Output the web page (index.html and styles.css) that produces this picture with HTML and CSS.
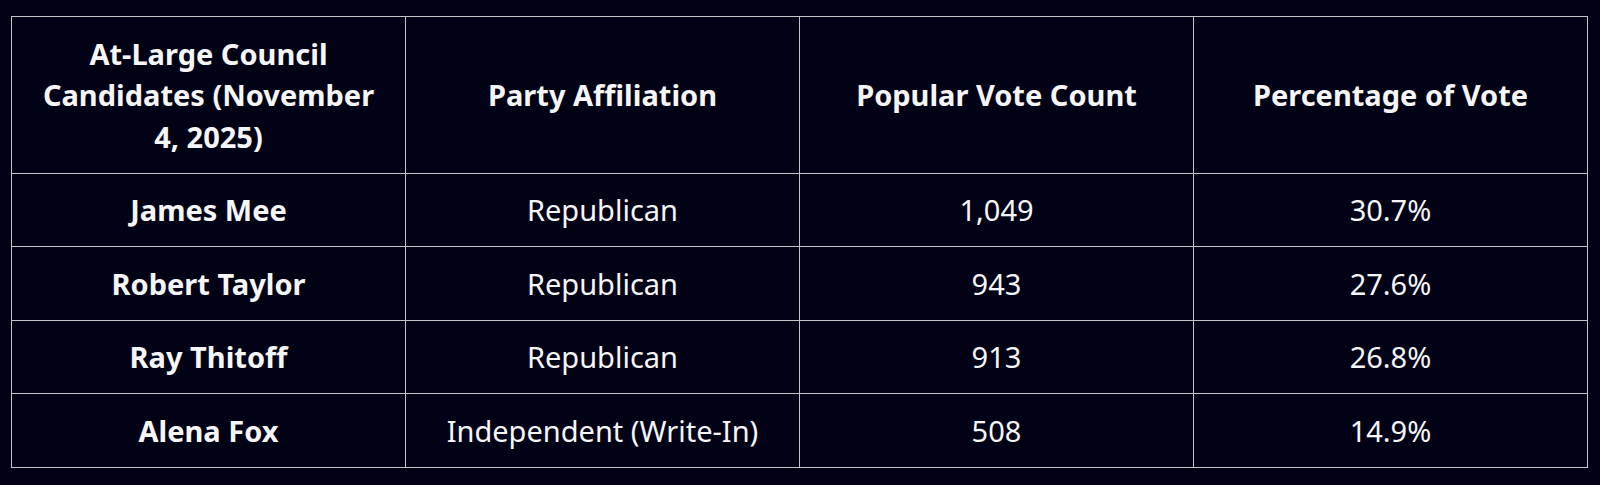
FILE: index.html
```html
<!DOCTYPE html>
<html lang="en">
<head>
<meta charset="utf-8">
<title>At-Large Council Results</title>
<link rel="stylesheet" href="styles.css">
</head>
<body>
<table class="results">
  <thead>
    <tr>
      <th>At-Large Council Candidates (November 4, 2025)</th>
      <th>Party Affiliation</th>
      <th>Popular Vote Count</th>
      <th>Percentage of Vote</th>
    </tr>
  </thead>
  <tbody>
    <tr><th class="name">James Mee</th><td>Republican</td><td>1,049</td><td>30.7%</td></tr>
    <tr><th class="name">Robert Taylor</th><td>Republican</td><td>943</td><td>27.6%</td></tr>
    <tr><th class="name">Ray Thitoff</th><td>Republican</td><td>913</td><td>26.8%</td></tr>
    <tr><th class="name">Alena Fox</th><td>Independent (Write-In)</td><td>508</td><td>14.9%</td></tr>
  </tbody>
</table>
</body>
</html>
```

FILE: styles.css
```css
html, body {
  margin: 0;
  padding: 0;
  background: #020216;
}
body {
  padding: 16px 0 0 11px;
  font-family: "Noto Sans", "Open Sans", sans-serif;
  color: #f6f6f8;
}
.results {
  border-collapse: collapse;
  width: 1577px;
  table-layout: fixed;
  font-size: 29px;
  line-height: 1.43;
}
.results th,
.results td {
  border: 1px solid #c4c4c8;
  padding: 15.6px 20px 15.5px;
  text-align: center;
  vertical-align: middle;
}
.results th {
  font-weight: 700;
}
.results td {
  font-weight: 400;
}
```
